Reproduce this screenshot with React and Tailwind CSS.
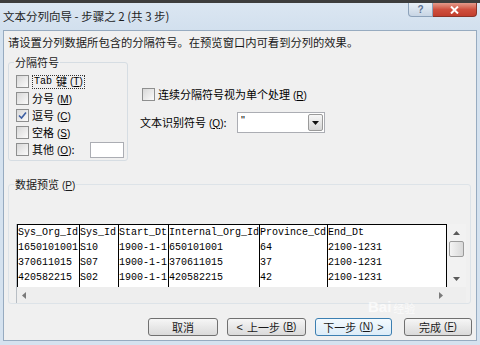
import React from "react";

function M({ c }) {
  return (
    <span className="ml-[3px] font-['Liberation_Sans',sans-serif] text-[10px]">
      (<span className="underline">{c}</span>)
    </span>
  );
}

function Cb({ checked }) {
  return (
    <span className="w-[13px] h-[13px] shrink-0 border border-[#8e8f8f] bg-linear-to-br from-[#d8d8d8] to-[#fbfbfb] flex items-center justify-center">
      {checked && (
        <svg width="9" height="9" viewBox="0 0 9 9">
          <path d="M1 4.5 L3.5 7 L8 1.5" fill="none" stroke="#3d5fa3" strokeWidth="1.6" />
        </svg>
      )}
    </span>
  );
}

function Row({ checked, children, extra }) {
  return (
    <div className="h-[17px] flex items-center gap-[3px]">
      <Cb checked={checked} />
      {children}
      {extra}
    </div>
  );
}

const cols = [
  { w: "w-[62px]", d: ["Sys_Org_Id", "1650101001", "370611015", "420582215"] },
  { w: "w-[39px]", d: ["Sys_Id", "S10", "S07", "S02"] },
  { w: "w-[50px]", d: ["Start_Dt", "1900-1-1", "1900-1-1", "1900-1-1"] },
  { w: "w-[91px]", d: ["Internal_Org_Id", "650101001", "370611015", "420582215"] },
  { w: "w-[68px]", d: ["Province_Cd", "64", "37", "42"] },
  { w: "flex-1", d: ["End_Dt", "2100-1231", "2100-1231", "2100-1231"] },
];

function Btn({ w, children, focus }) {
  return (
    <div
      className={
        "h-[18px] rounded-[3px] border flex items-center justify-center text-[11px] text-[#1a1a1a] " +
        w +
        (focus
          ? " border-[#3c7fb1] bg-linear-to-b from-[#f4fafe] to-[#dcecf8]"
          : " border-[#707070] bg-linear-to-b from-[#f6f6f6] to-[#dadada]")
      }
    >
      {children}
    </div>
  );
}

export default function App() {
  return (
    <div className="w-[480px] h-[345px] overflow-hidden bg-[#d5e2ef] flex flex-col relative font-['Noto_Sans_CJK_SC',sans-serif] text-[11px] text-black leading-none">
      <div className="h-[3px] bg-[#3d3d3d] shrink-0" />
      <div className="h-[27px] flex shrink-0 bg-linear-to-b from-[#dbe6f2] to-[#d2e0ee]">
        <div className="pl-[3px] pt-[6px] text-[11.5px] text-[#1e1e1e] leading-[14px]">
          文本分列向导 - 步骤之 2 (共 3 步)
        </div>
        <div className="ml-auto mr-[3px] flex h-[14px]">
          <div className="w-[25px] rounded-bl-[4px] border border-t-0 border-[#8da2ba] bg-linear-to-b from-[#e9f0f7] to-[#c8d5e4] flex items-center justify-center text-[10px] text-[#5d7393] font-['Liberation_Sans',sans-serif] font-bold">
            ?
          </div>
          <div className="w-[44px] rounded-br-[4px] border border-t-0 border-l-0 border-[#8b3328] bg-linear-to-b from-[#e39a8b] via-[#cf4f3e] to-[#c23e2e] flex items-center justify-center">
            <svg width="9" height="8" viewBox="0 0 9 8">
              <path d="M1 0.5 L8 7.5 M8 0.5 L1 7.5" stroke="#ffffff" strokeWidth="2" />
            </svg>
          </div>
        </div>
      </div>

      <div className="mx-[3px] mb-[4px] flex-1 border border-[#97abc0] bg-[#f0f0f0] flex flex-col">
        <div className="h-[24px] flex items-center pl-[4px] text-[11.3px] text-[#1a1a1a]">
          请设置分列数据所包含的分隔符号。在预览窗口内可看到分列的效果。
        </div>

        <div className="flex h-[106px]">
          <fieldset className="ml-[4px] w-[120px] h-[106px] border border-[#d6dde3] rounded-[3px]">
            <legend className="ml-[5px] px-[1px] h-[14px] leading-[14px] text-[11px] text-[#1a1a1a]">分隔符号</legend>
            <div className="pt-[4px] pl-[7px] pr-[3px] flex flex-col">
              <Row>
                <span className="border border-dotted border-[#333] px-[1px] h-[14px] flex items-center">
                  <span className="font-['Liberation_Mono',monospace] text-[10px]">Tab</span>
                  <span className="ml-[4px]">键</span>
                  <M c="T" />
                </span>
              </Row>
              <Row>
                <span>
                  分号<M c="M" />
                </span>
              </Row>
              <Row checked>
                <span>
                  逗号<M c="C" />
                </span>
              </Row>
              <Row>
                <span>
                  空格<M c="S" />
                </span>
              </Row>
              <Row
                extra={<div className="ml-auto w-[34px] h-[16px] bg-white border border-[#abadb3]" />}
              >
                <span>
                  其他<M c="O" />:
                </span>
              </Row>
            </div>
          </fieldset>

          <div className="ml-[12px] flex flex-col">
            <div className="mt-[31px] h-[17px] flex items-center gap-[3px] pl-[2px]">
              <Cb />
              <span>
                连续分隔符号视为单个处理<M c="R" />
              </span>
            </div>
            <div className="mt-[9px] h-[21px] flex items-center">
              <span className="w-[97px]">
                文本识别符号<M c="Q" />:
              </span>
              <div className="w-[88px] h-[21px] bg-white border border-[#abadb3] flex items-center">
                <span className="pl-[3px] font-['Liberation_Sans',sans-serif] text-[11px] self-start pt-[2px]">"</span>
                <div className="ml-auto mr-[1px] w-[15px] h-[17px] border border-[#9a9a9a] rounded-[2px] bg-linear-to-b from-[#f7f7f7] to-[#d6d6d6] flex items-center justify-center">
                  <svg width="7" height="4" viewBox="0 0 7 4">
                    <path d="M0 0 H7 L3.5 4 Z" fill="#111" />
                  </svg>
                </div>
              </div>
            </div>
          </div>
        </div>

        <fieldset className="mt-[16px] ml-[4px] w-[463px] border border-[#dde3e8] rounded-[3px]">
          <legend className="ml-[5px] px-[1px] h-[14px] leading-[14px] text-[11px] text-[#1a1a1a]">
            数据预览<M c="P" />
          </legend>
          <div className="pt-[33px] pl-[7px]">
            <div className="w-[450px] h-[79px] flex flex-col border-l border-[#b8bec4]">
              <div className="flex h-[63px]">
                <div className="w-[431px] h-[63px] bg-white border-t border-r border-black flex font-['Liberation_Mono',monospace] text-[10px]">
                  {cols.map((c, i) => (
                    <div key={i} className={c.w + " border-l border-black flex flex-col"}>
                      {c.d.map((t, j) => (
                        <div key={j} className="h-[15px] leading-[15px] whitespace-nowrap overflow-hidden">
                          {t}
                        </div>
                      ))}
                    </div>
                  ))}
                </div>
                <div className="w-[19px] h-[63px] bg-[#f2f2f2] flex flex-col items-center">
                  <div className="h-[17px] flex items-center justify-center">
                    <svg width="7" height="4" viewBox="0 0 7 4">
                      <path d="M0 4 H7 L3.5 0 Z" fill="#5a5a5a" />
                    </svg>
                  </div>
                  <div className="w-[15px] h-[16px] border border-[#9b9b9b] rounded-[2px] bg-linear-to-r from-[#f4f4f4] to-[#d9d9d9]" />
                  <div className="flex-1" />
                  <div className="h-[17px] flex items-center justify-center">
                    <svg width="7" height="4" viewBox="0 0 7 4">
                      <path d="M0 0 H7 L3.5 4 Z" fill="#5a5a5a" />
                    </svg>
                  </div>
                </div>
              </div>
              <div className="h-[16px] flex items-center pl-[5px] pr-[23px] bg-[#eeeeee]">
                <svg width="4" height="7" viewBox="0 0 4 7">
                  <path d="M4 0 V7 L0 3.5 Z" fill="#7a7a7a" />
                </svg>
                <svg className="ml-auto" width="4" height="7" viewBox="0 0 4 7">
                  <path d="M0 0 V7 L4 3.5 Z" fill="#7a7a7a" />
                </svg>
              </div>
            </div>
          </div>
        </fieldset>

        <div className="mt-[14px] h-[18px] flex justify-end pr-[4px]">
          <Btn w="w-[70px]">取消</Btn>
          <div className="w-[9px]" />
          <Btn w="w-[79px]">
            <span className="font-['Liberation_Sans',sans-serif] mr-[4px]">&lt;</span>上一步<M c="B" />
          </Btn>
          <div className="w-[9px]" />
          <Btn w="w-[77px]" focus>
            下一步<M c="N" />
            <span className="font-['Liberation_Sans',sans-serif] ml-[4px]">&gt;</span>
          </Btn>
          <div className="w-[12px]" />
          <Btn w="w-[68px]">
            完成<M c="F" />
          </Btn>
        </div>
      </div>

      <div className="absolute left-[368px] top-[299px] text-white/70 text-[15px] font-bold font-['Liberation_Sans',sans-serif] pointer-events-none flex items-end gap-[2px]">
        <span>Bai</span>
        <span className="text-[11px] font-normal font-['Noto_Sans_CJK_SC',sans-serif]">经验</span>
      </div>
    </div>
  );
}
